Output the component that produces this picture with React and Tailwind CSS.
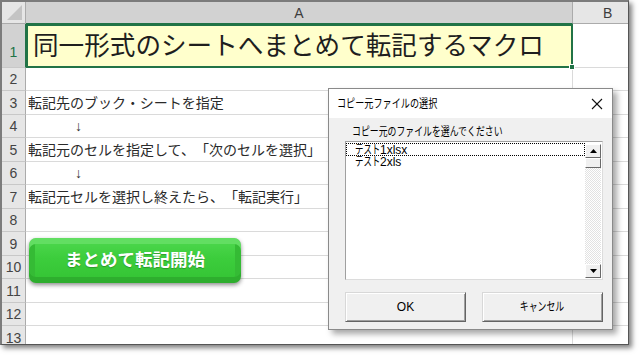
const FONT = "font-['Liberation_Sans','Noto_Sans_CJK_JP',sans-serif]";

const rows = [
  { n: 2, tall: false },
  { n: 3, tall: true, t: "転記先のブック・シートを指定" },
  { n: 4, tall: false, arrow: true },
  { n: 5, tall: true, t: "転記元のセルを指定して、「次のセルを選択」" },
  { n: 6, tall: false, arrow: true },
  { n: 7, tall: true, t: "転記元セルを選択し終えたら、「転記実行」" },
  { n: 8, tall: false },
  { n: 9, tall: true },
  { n: 10, tall: false },
  { n: 11, tall: true },
  { n: 12, tall: false },
  { n: 13, tall: true },
];

function Row({ r }) {
  return (
    <div className={(r.tall ? "h-[24px]" : "h-[23px]") + " flex shrink-0"}>
      <div className="w-[24px] shrink-0 bg-[#e6e6e6] border-r border-r-[#ababab] border-b border-b-[#c8c8c8] flex items-center justify-center text-[14px] text-[#444] leading-none">
        {r.n}
      </div>
      <div className="w-[547px] shrink-0 border-r border-b border-[#dadada] flex items-center pl-[2px] text-[14px] text-[#2a2a2a] whitespace-nowrap leading-none [text-spacing-trim:space-all]">
        {r.t ? r.t : null}
        {r.arrow ? <span className="pl-[47px] text-[14px] text-[#333]">↓</span> : null}
      </div>
      <div className="flex-1 border-b border-[#dadada]" />
    </div>
  );
}

function ArrowBtn({ down }) {
  return (
    <div className="h-[14px] w-[16px] bg-[#f0f0f0] border border-t-white border-l-white border-r-[#696969] border-b-[#696969] flex items-center justify-center">
      <svg width="7" height="4" viewBox="0 0 7 4">
        {down ? <polygon points="0,0 7,0 3.5,4" fill="#000" /> : <polygon points="0,4 7,4 3.5,0" fill="#000" />}
      </svg>
    </div>
  );
}

export default function App() {
  return (
    <div className={"w-[640px] h-[356px] bg-white overflow-hidden " + FONT}>
      <div className="relative w-[629px] h-[345px] overflow-hidden bg-white border-l-2 border-t-2 border-l-[#7c7c7c] border-t-[#7c7c7c] border-r border-b border-r-[#555] border-b-[#555] shadow-[3px_3px_5px_rgba(0,0,0,0.5)] flex flex-col">
        {/* column header */}
        <div className="h-[22px] flex shrink-0">
          <div className="w-[24px] shrink-0 bg-[#e6e6e6] border-r border-b border-[#ababab] relative flex items-end justify-end p-[3px]">
            <svg width="15" height="15" viewBox="0 0 15 15">
              <polygon points="15,0 15,15 0,15" fill="#c4c4c4" />
            </svg>
          </div>
          <div className="w-[547px] shrink-0 bg-[#d2d2d2] border-r border-r-[#ababab] border-b border-b-[#217346] flex items-center justify-center text-[14px] text-[#3d3d3d] leading-none">
            A
          </div>
          <div className="flex-1 bg-[#e6e6e6] border-b border-[#ababab] flex items-center pl-[30px] text-[14px] text-[#3d3d3d] leading-none">
            B
          </div>
        </div>

        {/* row 1 */}
        <div className="h-[44px] flex shrink-0">
          <div className="w-[24px] shrink-0 bg-[#d2d2d2] border-r border-r-[#217346] border-b border-b-[#c8c8c8] flex items-end justify-center pb-[8px] text-[14px] text-[#217346] leading-none">
            1
          </div>
          <div className="w-[547px] shrink-0 relative bg-[#ffffcc] border-2 border-[#217346] flex items-center pl-[5px] pt-[2px] text-[25.6px] text-[#1e1e1e] whitespace-nowrap leading-none">
            同一形式のシートへまとめて転記するマクロ
            <div className="absolute -right-[4px] -bottom-[4px] w-[6px] h-[6px] bg-[#217346] border border-white" />
          </div>
          <div className="flex-1 border-b border-[#dadada]" />
        </div>

        {rows.map((r) => (
          <Row key={r.n} r={r} />
        ))}

        {/* green macro button */}
        <div className="absolute left-[27px] top-[236px] w-[212px] h-[45px] rounded-[7px] bg-[#3bcb3b] bg-[linear-gradient(180deg,#4fd84f_0%,#3ccd3c_45%,#34c334_100%)] shadow-[inset_0_6px_0_#62de62,inset_0_-6px_0_#2eae2e,inset_6px_0_0_#35bb35,inset_-6px_0_0_#35bb35,0_2px_4px_rgba(0,0,0,0.45)] flex items-center justify-center">
          <span className="text-white font-bold text-[17.5px] leading-none [text-shadow:0_1px_1px_rgba(0,0,0,0.25)]">
            まとめて転記開始
          </span>
        </div>

        {/* dialog */}
        <div className="absolute left-[326px] top-[86px] w-[285px] h-[242px] border border-[#8a8a8a] bg-[#f0f0f0] flex flex-col shadow-[4px_4px_6px_rgba(0,0,0,0.35)]">
          <div className="h-[29px] bg-white flex items-center justify-between pl-[8px] pr-[9px] shrink-0">
            <span className="inline-block origin-left scale-x-[0.76] text-[12px] text-black whitespace-nowrap leading-none">
              コピー元ファイルの選択
            </span>
            <svg width="12" height="12" viewBox="0 0 12 12">
              <line x1="1" y1="1" x2="11" y2="11" stroke="#111" strokeWidth="1.1" />
              <line x1="11" y1="1" x2="1" y2="11" stroke="#111" strokeWidth="1.1" />
            </svg>
          </div>
          <div className="flex-1 flex flex-col pl-[16px] pr-[9px] pt-[4px] pb-[7px]">
            <div className="h-[19px] flex items-center pl-[7px]">
              <span className="inline-block origin-left scale-x-[0.74] text-[12px] text-black whitespace-nowrap leading-none">
                コピー元のファイルを選んでください
              </span>
            </div>
            <div className="w-[258px] h-[139px] bg-white border border-t-[#a0a0a0] border-l-[#a0a0a0] border-r-[#dcdcdc] border-b-[#dcdcdc] flex">
              <div className="flex-1 pt-[1px] flex flex-col">
                <div className="h-[13px] border border-dotted border-black flex items-center pl-[8px] text-[12px] leading-none text-black whitespace-nowrap">
                  <span className="inline-block origin-left scale-x-[0.7] w-[25px]">テスト</span>
                  <span>1xlsx</span>
                </div>
                <div className="h-[12px] flex items-center pl-[9px] text-[12px] leading-none text-black whitespace-nowrap">
                  <span className="inline-block origin-left scale-x-[0.7] w-[25px]">テスト</span>
                  <span>2xls</span>
                </div>
              </div>
              <div className="w-[17px] flex flex-col pt-[2px] pb-[1px]">
                <ArrowBtn />
                <div className="h-[10px] w-[16px] bg-[#f0f0f0] border border-t-white border-l-white border-r-[#696969] border-b-[#696969]" />
                <div className="flex-1 w-[16px] bg-[repeating-conic-gradient(#e2e2e2_0%_25%,#ffffff_0%_50%)] bg-size-[2px_2px]" />
                <ArrowBtn down />
              </div>
            </div>
            <div className="mt-[12px] flex gap-[16px]">
              <div className="w-[121px] h-[30px] bg-[#f0f0f0] border border-t-[#d8d8d8] border-l-[#d8d8d8] border-r-[#646464] border-b-[#646464] shadow-[inset_1px_1px_0_#ffffff,inset_-1px_-1px_0_#a0a0a0] flex items-center justify-center text-[12px] text-black leading-none">
                OK
              </div>
              <div className="w-[121px] h-[30px] bg-[#f0f0f0] border border-t-[#d8d8d8] border-l-[#d8d8d8] border-r-[#646464] border-b-[#646464] shadow-[inset_1px_1px_0_#ffffff,inset_-1px_-1px_0_#a0a0a0] flex items-center justify-center">
                <span className="inline-block scale-x-[0.74] text-[12px] text-black leading-none whitespace-nowrap">
                  キャンセル
                </span>
              </div>
            </div>
          </div>
        </div>
      </div>
    </div>
  );
}
